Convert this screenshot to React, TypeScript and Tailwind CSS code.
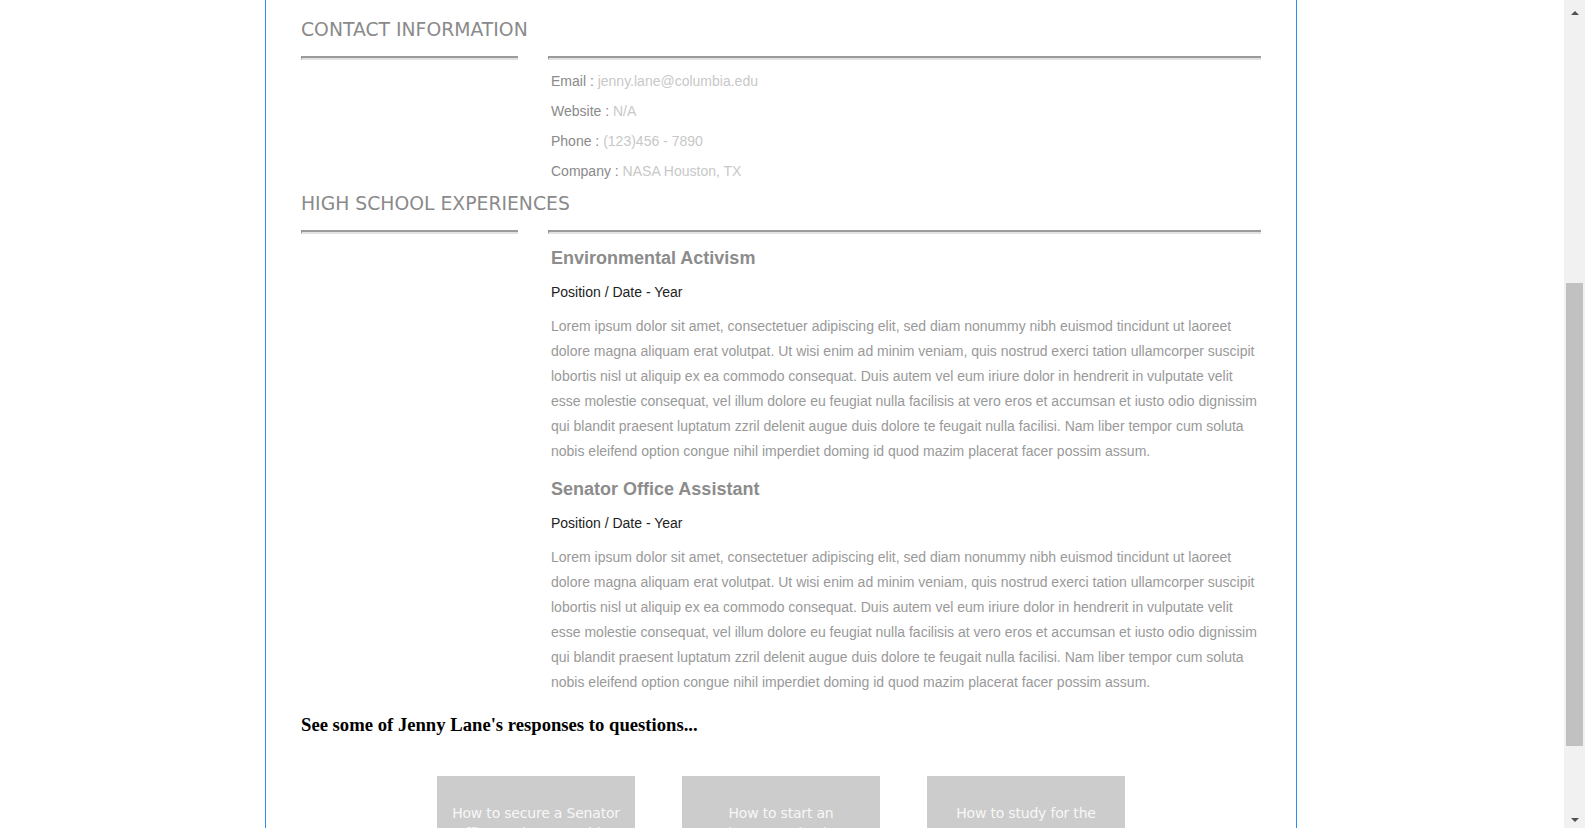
import type { ReactNode } from "react";

const LOREM =
  "Lorem ipsum dolor sit amet, consectetuer adipiscing elit, sed diam nonummy nibh euismod tincidunt ut laoreet dolore magna aliquam erat volutpat. Ut wisi enim ad minim veniam, quis nostrud exerci tation ullamcorper suscipit lobortis nisl ut aliquip ex ea commodo consequat. Duis autem vel eum iriure dolor in hendrerit in vulputate velit esse molestie consequat, vel illum dolore eu feugiat nulla facilisis at vero eros et accumsan et iusto odio dignissim qui blandit praesent luptatum zzril delenit augue duis dolore te feugait nulla facilisi. Nam liber tempor cum soluta nobis eleifend option congue nihil imperdiet doming id quod mazim placerat facer possim assum.";

const CONTACT = [
  { label: "Email", value: "jenny.lane@columbia.edu" },
  { label: "Website", value: "N/A" },
  { label: "Phone", value: "(123)456 - 7890" },
  { label: "Company", value: "NASA Houston, TX" },
];

const EXPERIENCES = ["Environmental Activism", "Senator Office Assistant"];

const QUESTIONS = [
  "How to secure a Senator Office Assistant Position",
  "How to start an Environmental Science Club",
  "How to study for the SAT/ACT",
];

function Rule() {
  // grooved divider: dark top, pale underside
  return <div className="h-[4px] border-t-2 border-b-2 border-t-[#9b9b9b] border-b-[#e2e2e2] border-l border-l-[#8a8a8a]" />;
}

function Section({ title, className, children }: { title: string; className?: string; children: ReactNode }) {
  return (
    <section className={className}>
      <h2 className="font-['DejaVu_Sans',sans-serif] text-[18.8px] leading-[24px] text-[#8a8a8a]">{title}</h2>
      <div className="mt-[14px] grid grid-cols-[217px_713px] gap-x-[30px]">
        <Rule />
        <Rule />
        <div />
        <div className="pl-[3px]">{children}</div>
      </div>
    </section>
  );
}

function Scrollbar() {
  return (
    <div className="flex w-[21px] shrink-0 flex-col items-center bg-[#f1f1f1]">
      <div className="flex h-[25px] items-center justify-center">
        <div className="h-0 w-0 border-x-[4px] border-b-[4px] border-x-transparent border-b-[#505050]" />
      </div>
      <div className="mt-[258px] h-[463px] w-[17px] bg-[#c1c1c1]" />
      <div className="mt-auto flex h-[17px] items-center justify-center">
        <div className="h-0 w-0 border-x-[4px] border-t-[4px] border-x-transparent border-t-[#505050]" />
      </div>
    </div>
  );
}

export default function App() {
  return (
    <div className="flex h-[828px] w-full overflow-hidden bg-white font-['Liberation_Sans',Arial,sans-serif]">
      <main className="flex-1 overflow-hidden">
        <div className="ml-[265px] h-full w-[1032px] border-x border-[#2f8cf5] px-[35px] pt-[18px]">
          <Section title="CONTACT INFORMATION">
            <div className="mt-[6px] text-[14px] leading-[30px]">
              {CONTACT.map((c) => (
                <div key={c.label}>
                  <span className="text-[#8a8a8a]">{c.label} : </span>
                  <span className="text-[#c8c8c8]">{c.value}</span>
                </div>
              ))}
            </div>
          </Section>

          <Section title="HIGH SCHOOL EXPERIENCES" className="mt-[6px]">
            <div className="pt-[13px]">
              {EXPERIENCES.map((title, i) => (
                <div key={title} className={i > 0 ? "mt-[15px]" : ""}>
                  <h3 className="text-[18px] font-bold leading-[22px] text-[#8c8c8c]">{title}</h3>
                  <p className="mt-[13px] text-[14px] leading-[20px] text-[#222]">Position / Date - Year</p>
                  <p className="mt-[12px] text-[14px] leading-[24.9px] text-[#999]">{LOREM}</p>
                </div>
              ))}
            </div>
          </Section>

          <p className="mt-[18px] font-['Liberation_Serif',serif] text-[18.67px] font-bold leading-[24px] text-black">
            See some of Jenny Lane's responses to questions...
          </p>

          <div className="mt-[39px] flex justify-center gap-[47px]">
            {QUESTIONS.map((q) => (
              <div
                key={q}
                className="h-[200px] w-[198px] bg-[#cccccc] px-[12px] pt-[27px] text-center font-['DejaVu_Sans',sans-serif] text-[14px] leading-[20px] tracking-[-0.2px] text-[#f7f7f7]"
              >
                {q}
              </div>
            ))}
          </div>
        </div>
      </main>
      <Scrollbar />
    </div>
  );
}
